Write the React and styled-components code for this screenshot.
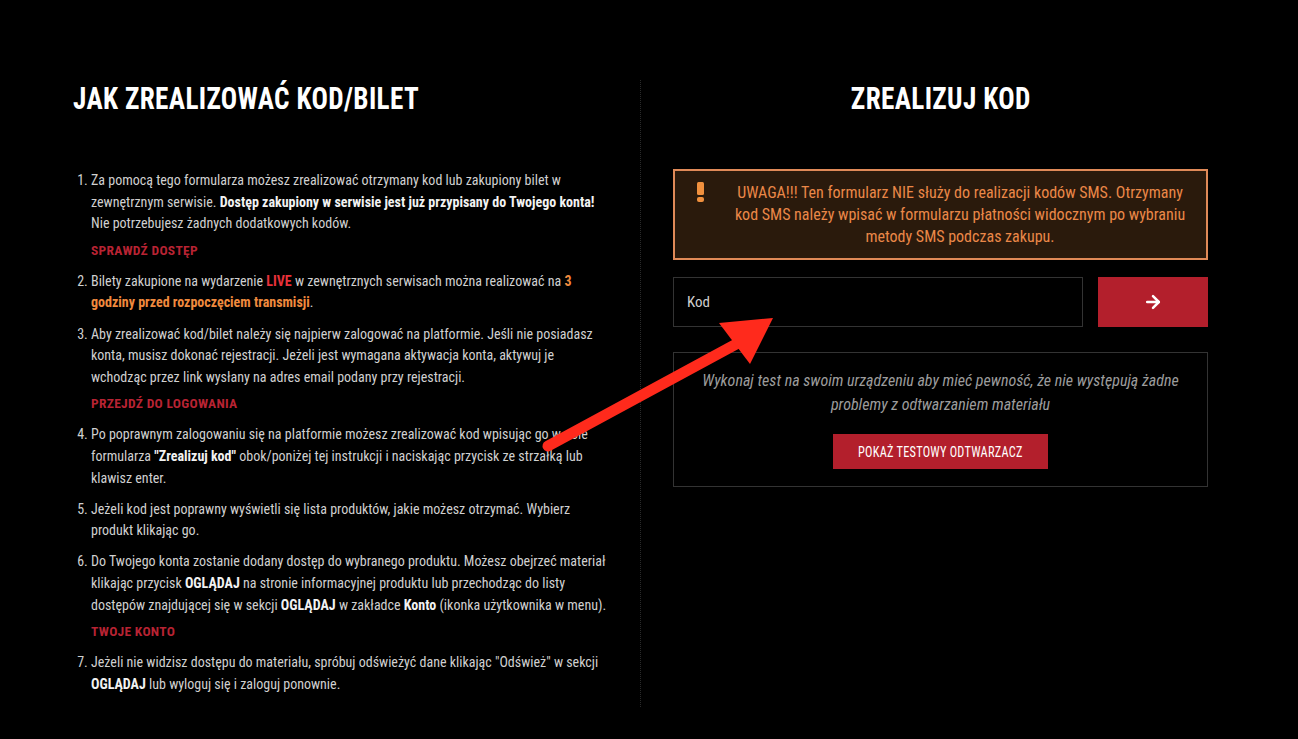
import React from 'react';
import styled, { createGlobalStyle } from 'styled-components';
import { ArrowRight } from 'lucide-react';

const GlobalStyle = createGlobalStyle`
    html, body {
        margin: 0;
        padding: 0;
        background: #000;
    }
    body {
        font-family: "Roboto Condensed", "Liberation Sans Narrow", "DejaVu Sans Condensed", Roboto, sans-serif;
        font-stretch: condensed;
        color: #d6d6d6;
    }
`;

const getSteps = () => [
    {
        text: (
            <>
                Za pomocą tego formularza możesz zrealizować otrzymany kod lub zakupiony bilet w zewnętrznym serwisie.{' '}
                <B>Dostęp zakupiony w serwisie jest już przypisany do Twojego konta!</B> Nie potrzebujesz żadnych dodatkowych kodów.
            </>
        ),
        link: 'SPRAWDŹ DOSTĘP'
    },
    {
        text: (
            <>
                Bilety zakupione na wydarzenie <Hl $c="#e8313a">LIVE</Hl> w zewnętrznych serwisach można realizować na{' '}
                <Hl $c="#f08a3e">3 godziny przed rozpoczęciem transmisji</Hl>.
            </>
        )
    },
    {
        text: (
            <>
                Aby zrealizować kod/bilet należy się najpierw zalogować na platformie. Jeśli nie posiadasz konta, musisz dokonać rejestracji. Jeżeli jest wymagana aktywacja konta, aktywuj je wchodząc przez link wysłany na adres email podany przy rejestracji.
            </>
        ),
        link: 'PRZEJDŹ DO LOGOWANIA'
    },
    {
        text: (
            <>
                Po poprawnym zalogowaniu się na platformie możesz zrealizować kod wpisując go w pole formularza <B>"Zrealizuj kod"</B> obok/poniżej tej instrukcji i naciskając przycisk ze strzałką lub klawisz enter.
            </>
        )
    },
    {
        text: <>Jeżeli kod jest poprawny wyświetli się lista produktów, jakie możesz otrzymać. Wybierz produkt klikając go.</>
    },
    {
        text: (
            <>
                Do Twojego konta zostanie dodany dostęp do wybranego produktu. Możesz obejrzeć materiał klikając przycisk <B>OGLĄDAJ</B> na stronie informacyjnej produktu lub przechodząc do listy dostępów znajdującej się w sekcji <B>OGLĄDAJ</B> w zakładce <B>Konto</B> (ikonka użytkownika w menu).
            </>
        ),
        link: 'TWOJE KONTO'
    },
    {
        text: (
            <>
                Jeżeli nie widzisz dostępu do materiału, spróbuj odświeżyć dane klikając "Odśwież" w sekcji <B>OGLĄDAJ</B> lub wyloguj się i zaloguj ponownie.
            </>
        )
    }
];

const App = () => (
    <Page>
        <GlobalStyle />
        <Columns>
            <LeftCol>
                <Title><Narrow>JAK ZREALIZOWAĆ KOD/BILET</Narrow></Title>
                <Steps>
                    {getSteps().map((s, i) => (
                        <Step key={i}>
                            {s.text}
                            {s.link && <StepLink>{s.link}</StepLink>}
                        </Step>
                    ))}
                </Steps>
            </LeftCol>
            <Divider />
            <RightCol>
                <Title $center><Narrow $center>ZREALIZUJ KOD</Narrow></Title>
                <Warning>
                    <WarnIcon width="7" height="20" viewBox="0 0 7 20">
                        <rect x="0" y="0" width="7" height="13" rx="1.5" fill="#f0903e" />
                        <rect x="0" y="15" width="7" height="5" rx="2" fill="#f0903e" />
                    </WarnIcon>
                    <WarnText>
                        UWAGA!!! Ten formularz NIE służy do realizacji kodów SMS. Otrzymany kod SMS należy wpisać w formularzu płatności widocznym po wybraniu metody SMS podczas zakupu.
                    </WarnText>
                </Warning>
                <CodeForm>
                    <CodeInput placeholder="Kod" />
                    <SubmitButton type="button">
                        <ArrowRight size={20} strokeWidth={3} color="#fff" />
                    </SubmitButton>
                </CodeForm>
                <TestBox>
                    <TestText>
                        Wykonaj test na swoim urządzeniu aby mieć pewność, że nie występują żadne problemy z odtwarzaniem materiału
                    </TestText>
                    <RedButton type="button"><Narrow $center $scale={0.82}>POKAŻ TESTOWY ODTWARZACZ</Narrow></RedButton>
                </TestBox>
            </RightCol>
        </Columns>
        <Annotation width="1298" height="739" viewBox="0 0 1298 739">
            <line x1="548" y1="446" x2="740" y2="342" stroke="#ff2a1c" strokeWidth="11" strokeLinecap="round" />
            <polygon points="719,323 773,318 750,364" fill="#ff2a1c" />
        </Annotation>
    </Page>
);

export default App;

const Page = styled.div`
    position: relative;
    width: 1298px;
    height: 739px;
    overflow: hidden;
    background: #000;
`;

const Columns = styled.div`
    display: flex;
    align-items: flex-start;
    padding: 80px 0 0 73px;
`;

const LeftCol = styled.div`
    width: 536px;
    margin-right: 31px;
    display: flex;
    flex-direction: column;
`;

const RightCol = styled.div`
    width: 535px;
    margin-left: 32px;
    display: flex;
    flex-direction: column;
`;

const Divider = styled.div`
    flex: none;
    width: 0;
    border-left: 1px dotted #2a2a2a;
    height: 627px;
`;

const Title = styled.h1`
    margin: 0;
    padding-top: 2px;
    font-size: 32px;
    line-height: 32px;
    font-weight: 700;
    letter-spacing: 0.4px;
    color: #fff;
    white-space: nowrap;
    text-align: ${p => (p.$center ? 'center' : 'left')};
`;

const Narrow = styled.span`
    display: inline-block;
    transform: scaleX(${p => p.$scale || 0.85});
    transform-origin: ${p => (p.$center ? 'center' : 'left')} center;
`;

const Steps = styled.ol`
    margin: 56px 0 0 0;
    padding: 0 0 0 18px;
    font-size: 14px;
    line-height: 21.6px;
    color: #d0d0d0;
`;

const Step = styled.li`
    padding-left: 0;
    margin-bottom: 9.5px;
`;

const StepLink = styled.div`
    margin-top: 5px;
    font-size: 13.5px;
    font-weight: 700;
    color: #b82333;
    letter-spacing: 0.3px;
`;

const B = styled.b`
    font-weight: 700;
    color: #f2f2f2;
`;

const Hl = styled.b`
    font-weight: 700;
    color: ${p => p.$c};
`;

const Warning = styled.div`
    display: flex;
    align-items: flex-start;
    margin-top: 55px;
    padding: 11px 16px 10px 22px;
    border: 2px solid #e08a58;
    background: #2a1a0c;
`;

const WarnIcon = styled.svg`
    flex: none;
`;

const WarnText = styled.div`
    flex: 1;
    margin-left: 26px;
    font-size: 16px;
    line-height: 22px;
    color: #ea8848;
    text-align: center;
`;

const CodeForm = styled.div`
    display: flex;
    gap: 15px;
    margin-top: 17px;
    height: 50px;
`;

const CodeInput = styled.input`
    flex: 1;
    min-width: 0;
    background: #000;
    border: 1px solid #333;
    padding: 0 13px;
    font-family: inherit;
    font-stretch: condensed;
    font-size: 15px;
    color: #ddd;
    outline: none;
    &::placeholder {
        color: #d0d0d0;
    }
`;

const SubmitButton = styled.button`
    width: 110px;
    border: 0;
    background: #b31f2c;
    display: flex;
    align-items: center;
    justify-content: center;
    cursor: pointer;
`;

const TestBox = styled.div`
    display: flex;
    flex-direction: column;
    align-items: center;
    margin-top: 25px;
    padding: 16px 24px 17px;
    border: 1px solid #333;
`;

const TestText = styled.div`
    font-size: 16px;
    line-height: 24px;
    font-style: italic;
    color: #9c9c9c;
    text-align: center;
`;

const RedButton = styled.button`
    margin-top: 17px;
    height: 35px;
    width: 215px;
    border: 0;
    background: #b31f2c;
    color: #fff;
    font-family: inherit;
    font-stretch: condensed;
    font-size: 15px;
    letter-spacing: 0.3px;
    cursor: pointer;
`;

const Annotation = styled.svg`
    position: absolute;
    left: 0;
    top: 0;
    pointer-events: none;
`;
